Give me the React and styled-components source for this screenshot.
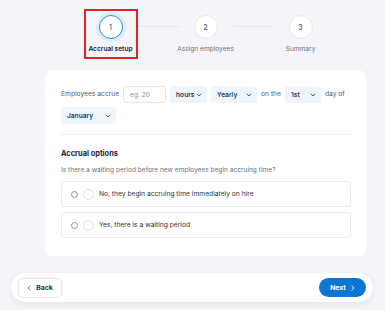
import React from "react";
import styled, { createGlobalStyle } from "styled-components";

const Global = createGlobalStyle`
  html, body { margin: 0; padding: 0; background: #f4f5f8; }
  body { font-family: Inter, "Noto Sans", sans-serif; color: #1f2733; }
  * { box-sizing: border-box; }
`;

const Page = styled.div`
  width: 385px;
  height: 310px;
  overflow: hidden;
  display: flex;
  flex-direction: column;
`;

const Main = styled.div`
  margin: 0 19px 0 45px;
  display: flex;
  flex-direction: column;
`;

const Stepper = styled.div`
  display: flex;
  justify-content: center;
  align-items: flex-start;
  padding-top: 9px;
  height: 70px;
`;

const Step = styled.div`
  width: 54px;
  height: 50px;
  display: flex;
  flex-direction: column;
  align-items: center;
  padding-top: 4px;
  border: 2px solid ${(p) => (p.$highlight ? "#e8202a" : "transparent")};
`;

const Circle = styled.div`
  width: 24px;
  height: 24px;
  border-radius: 50%;
  background: #fff;
  display: flex;
  align-items: center;
  justify-content: center;
  font-size: 7px;
  font-weight: 500;
  color: ${(p) => (p.$active ? "#1f5f9e" : "#4b5260")};
  border: ${(p) => (p.$active ? "1.5px solid #2b8de2" : "1px solid #e3e6eb")};
  box-shadow: ${(p) => (p.$active ? "0 0 0 3px #dcebfa" : "none")};
`;

const StepLabel = styled.div`
  margin-top: 6px;
  white-space: nowrap;
  font-size: 6.6px;
  line-height: 9px;
  font-weight: ${(p) => (p.$active ? 600 : 400)};
  color: ${(p) => (p.$active ? "#1f2733" : "#6b7280")};
`;

const Connector = styled.div`
  width: 41px;
  height: 1px;
  margin-top: 17px;
  background: #e3e6eb;
`;

const Card = styled.div`
  background: #fff;
  border-radius: 8px;
  padding: 16px 15px 18px 16px;
`;

const AccrueRow = styled.div`
  display: flex;
  flex-wrap: wrap;
  align-items: center;
  gap: 4px;
`;

const Text = styled.span`
  font-size: 6.7px;
  color: #555c68;
  line-height: 17px;
  white-space: nowrap;
`;

const Input = styled.div`
  width: 43px;
  height: 17px;
  border: 1px solid #e2e5ea;
  border-radius: 3px;
  display: flex;
  align-items: center;
  padding-left: 6px;
  font-size: 6.6px;
  color: #8b919c;
`;

const Select = styled.div`
  width: ${(p) => p.$w}px;
  height: 17px;
  border-radius: 3px;
  background: #eef5fc;
  display: flex;
  align-items: center;
  justify-content: space-between;
  padding: 0 5px 0 6px;
  font-size: 6.6px;
  font-weight: 600;
  color: #243a5c;
`;

const Chevron = () => (
  <svg width="6" height="4" viewBox="0 0 6 4" fill="none">
    <path d="M1 1l2 2 2-2" stroke="#3a4f70" strokeWidth="0.9" strokeLinecap="round" strokeLinejoin="round" />
  </svg>
);

const Divider = styled.div`
  height: 1px;
  background: #eceef2;
  margin: 10px 0 14px;
`;

const SectionTitle = styled.div`
  font-size: 7.4px;
  font-weight: 700;
  color: #1c2430;
  line-height: 10px;
`;

const Question = styled.div`
  margin-top: 6px;
  font-size: 6.6px;
  color: #6b7280;
  line-height: 10px;
`;

const Options = styled.div`
  margin-top: 6px;
  display: flex;
  flex-direction: column;
  gap: 5px;
`;

const Option = styled.div`
  height: 26px;
  border: 1px solid #e8eaee;
  border-radius: 4px;
  display: flex;
  align-items: center;
  padding-left: 9px;
`;

const NativeRadio = styled.span`
  width: 7px;
  height: 7px;
  border-radius: 50%;
  border: 1px solid #8f949c;
  background: #fff;
`;

const FancyRadio = styled.span`
  width: 11px;
  height: 11px;
  border-radius: 50%;
  border: 1px solid #dde0e5;
  background: #fff;
  margin-left: 5px;
`;

const OptionText = styled.span`
  margin-left: 5px;
  font-size: 6.7px;
  color: #2a313c;
`;

const Footer = styled.div`
  margin: auto 12px 8px 11px;
  height: 29px;
  border-radius: 15px;
  background: #fff;
  box-shadow: 0 2px 6px rgba(30, 40, 60, 0.08);
  display: flex;
  align-items: center;
  justify-content: space-between;
  padding: 0 7px;
`;

const BackButton = styled.button`
  width: 44px;
  height: 20px;
  border: 1px solid #e3e6eb;
  border-radius: 5px;
  background: #fff;
  display: flex;
  align-items: center;
  justify-content: center;
  gap: 5px;
  font-family: inherit;
  font-size: 6.8px;
  font-weight: 700;
  color: #2a313c;
  padding: 0;
`;

const NextButton = styled.button`
  width: 47px;
  height: 19px;
  border: none;
  border-radius: 10px;
  background: #0b76d4;
  display: flex;
  align-items: center;
  justify-content: center;
  gap: 5px;
  font-family: inherit;
  font-size: 6.8px;
  font-weight: 700;
  color: #fff;
  padding: 0;
`;

const Arrow = ({ dir, color }) => (
  <svg width="4" height="6" viewBox="0 0 4 6" fill="none">
    <path
      d={dir === "left" ? "M3 1L1 3l2 2" : "M1 1l2 2-2 2"}
      stroke={color}
      strokeWidth="0.9"
      strokeLinecap="round"
      strokeLinejoin="round"
    />
  </svg>
);

const steps = [
  { n: 1, label: "Accrual setup", active: true },
  { n: 2, label: "Assign employees" },
  { n: 3, label: "Summary" },
];

export default function App() {
  return (
    <Page>
      <Global />
      <Main>
        <Stepper>
          {steps.map((s, i) => (
            <React.Fragment key={s.n}>
              {i > 0 && <Connector />}
              <Step $highlight={s.active}>
                <Circle $active={s.active}>{s.n}</Circle>
                <StepLabel $active={s.active}>{s.label}</StepLabel>
              </Step>
            </React.Fragment>
          ))}
        </Stepper>
        <Card>
          <AccrueRow>
            <Text>Employees accrue</Text>
            <Input>eg. 20</Input>
            <Select $w={37}>hours<Chevron /></Select>
            <Select $w={46}>Yearly<Chevron /></Select>
            <Text>on the</Text>
            <Select $w={36}>1st<Chevron /></Select>
            <Text>day of</Text>
            <Select $w={55}>January<Chevron /></Select>
          </AccrueRow>
          <Divider />
          <SectionTitle>Accrual options</SectionTitle>
          <Question>Is there a waiting period before new employees begin accruing time?</Question>
          <Options>
            <Option>
              <NativeRadio />
              <FancyRadio />
              <OptionText>No, they begin accruing time immediately on hire</OptionText>
            </Option>
            <Option>
              <NativeRadio />
              <FancyRadio />
              <OptionText>Yes, there is a waiting period</OptionText>
            </Option>
          </Options>
        </Card>
      </Main>
      <Footer>
        <BackButton><Arrow dir="left" color="#6b7280" />Back</BackButton>
        <NextButton>Next<Arrow dir="right" color="#fff" /></NextButton>
      </Footer>
    </Page>
  );
}
